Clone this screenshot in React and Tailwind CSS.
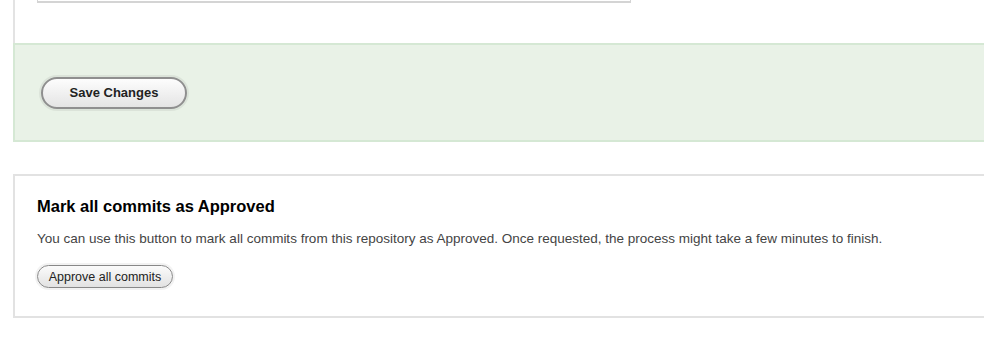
export default function App() {
  return (
    <div className="h-[359px] w-[984px] overflow-hidden bg-white font-['Liberation_Sans',Arial,sans-serif] text-[#333]">
      <section className="ml-[13px] mr-[-20px] border-l-2 border-[#e3e3e3]">
        <div className="h-[43px] pl-[22px]">
          <div className="h-[3px] w-[594px] border-x border-b-2 border-[#d4d4d4]" />
        </div>
        <div className="-ml-[2px] flex h-[99px] items-center border-2 border-r-0 border-[#d5e8d4] bg-[#e9f2e7] pl-[26px]">
          <button className="h-[32px] w-[146px] rounded-full border-2 border-[#8f8f8f] bg-[linear-gradient(#fdfdfd,#e4e4e4)] text-[13px] font-bold text-[#222] shadow-[0_0_0_2px_rgba(0,0,0,0.06)]">
            Save Changes
          </button>
        </div>
      </section>

      <section className="mt-[32px] ml-[13px] mr-[-20px] h-[144px] border-2 border-r-0 border-[#e2e2e2] pl-[22px] pt-[20px]">
        <h2 className="text-[16.5px] font-bold leading-[20px] text-black">Mark all commits as Approved</h2>
        <p className="mt-[15px] text-[13.5px] leading-[16px] text-[#444]">
          You can use this button to mark all commits from this repository as Approved. Once requested, the process might take a few minutes to finish.
        </p>
        <button className="mt-[18px] h-[23px] w-[136px] rounded-full border border-[#888] bg-[linear-gradient(#fbfbfb,#e2e2e2)] text-[12.5px] leading-[20px] text-[#222] shadow-[0_0_0_2px_rgba(0,0,0,0.05)]">
          Approve all commits
        </button>
      </section>
    </div>
  )
}
